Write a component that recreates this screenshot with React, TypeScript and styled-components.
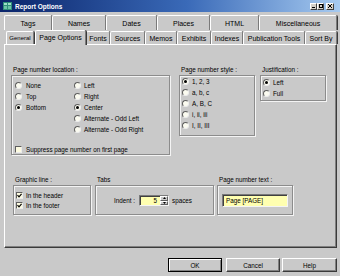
import styled, { createGlobalStyle } from 'styled-components';

const Global = createGlobalStyle`
    * { box-sizing: border-box; }
    body {
        margin: 0;
        background: #c9c9c9;
        font-family: "Liberation Sans", Arial, sans-serif;
        color: #000;
    }
`

const gray = '#c9c9c9'

const Window = styled.div`
    width: 340px;
    height: 276px;
    background: ${gray};
    display: flex;
    flex-direction: column;
    overflow: hidden;
`

const TitleBar = styled.div`
    height: 12px;
    flex: none;
    display: flex;
    align-items: center;
    padding: 0 6px 0 3px;
    background: linear-gradient(90deg, #0a246a 0%, #3a6ab8 55%, #a6caf0 100%);
`

const Title = styled.span`
    color: #fff;
    font-weight: bold;
    font-size: 6.5px;
    margin-left: 3px;
    flex: 1;
`

const Controls = styled.div`
    display: flex;
    align-items: center;
`

const CtrlButton = styled.div<{ $gap?: number; $w?: number }>`
    width: ${p => p.$w || 7}px;
    height: 7px;
    margin-left: ${p => p.$gap || 0}px;
    background: #d4d0c8;
    border: 1px solid;
    border-color: #fff #404040 #404040 #fff;
    display: flex;
    align-items: center;
    justify-content: center;
`

const Body = styled.div`
    flex: 1;
    display: flex;
    flex-direction: column;
    padding: 2px 3px 0 4px;
`

const TabRow = styled.div<{ $h: number; $indent?: number }>`
    height: ${p => p.$h}px;
    display: flex;
    padding-left: ${p => p.$indent || 0}px;
    flex: none;
`

const Tab = styled.div<{ $w: number; $active?: boolean; $small?: boolean; $gap?: number }>`
    width: ${p => p.$w}px;
    flex: none;
    margin-left: ${p => p.$gap || 0}px;
    margin-top: ${p => (p.$active ? 0 : 1)}px;
    display: flex;
    align-items: center;
    justify-content: center;
    font-size: ${p => (p.$small ? 6 : 7)}px;
    border-top: 1px solid #fff;
    border-left: 1px solid #fff;
    border-right: 1px solid #7a7a7a;
    box-shadow: 1px 0 0 #3a3a3a;
    border-radius: 2px 2px 0 0;
    white-space: nowrap;
    ${p => p.$active && `
        background: ${gray};
        position: relative;
        z-index: 1;
        margin-bottom: -1px;
        padding-bottom: 1px;
    `}
`

const Panel = styled.div`
    width: 333px;
    height: 204px;
    flex: none;
    border: 1px solid;
    border-color: #fff #3a3a3a #3a3a3a #fff;
    box-shadow: inset -1px -1px 0 #808080;
    display: flex;
    flex-direction: column;
`

const Section = styled.div<{ $top: number; $left: number }>`
    display: flex;
    align-items: flex-start;
    margin-top: ${p => p.$top}px;
    padding-left: ${p => p.$left}px;
`

const Group = styled.div<{ $w: number; $gap?: number }>`
    width: ${p => p.$w}px;
    margin-left: ${p => p.$gap || 0}px;
    display: flex;
    flex-direction: column;
`

const GroupLabel = styled.div`
    height: 10px;
    line-height: 10px;
    font-size: 6.3px;
    padding-left: 2px;
    white-space: nowrap;
`

const GroupBox = styled.div<{ $h: number; $pad: string; $row?: boolean }>`
    height: ${p => p.$h}px;
    padding: ${p => p.$pad};
    border: 1px solid #8c8c8c;
    box-shadow: 1px 1px 0 #f4f4f4, inset 1px 1px 0 #f4f4f4;
    display: flex;
    flex-direction: ${p => (p.$row ? 'row' : 'column')};
    align-items: ${p => (p.$row ? 'center' : 'stretch')};
`

const Columns = styled.div`
    display: flex;
`

const Column = styled.div<{ $w?: number }>`
    width: ${p => (p.$w ? `${p.$w}px` : 'auto')};
    display: flex;
    flex-direction: column;
`

const Option = styled.div<{ $h?: number; $gap?: number }>`
    height: ${p => p.$h || 11}px;
    display: flex;
    align-items: center;
    gap: ${p => p.$gap || 4}px;
    font-size: 6.3px;
    white-space: nowrap;
`

const RadioDot = styled.span<{ $on?: boolean }>`
    width: 7px;
    height: 7px;
    flex: none;
    border-radius: 50%;
    background: #fbfbf0;
    border: 1px solid;
    border-color: #5e5e5e #ececec #ececec #5e5e5e;
    display: flex;
    align-items: center;
    justify-content: center;
    &::after {
        content: '';
        width: 3px;
        height: 3px;
        border-radius: 50%;
        background: ${p => (p.$on ? '#000' : 'transparent')};
    }
`

const CheckBox = styled.span`
    width: 7px;
    height: 7px;
    flex: none;
    background: #fdfbe0;
    border: 1px solid;
    border-color: #5e5e5e #ececec #ececec #5e5e5e;
    display: flex;
    align-items: center;
    justify-content: center;
`

const Field = styled.div<{ $w: number; $h: number }>`
    width: ${p => p.$w}px;
    height: ${p => p.$h}px;
    flex: none;
    display: flex;
    background: #ffffb0;
    border: 1px solid;
    border-color: #7a7a7a #f4f4f4 #f4f4f4 #7a7a7a;
    box-shadow: inset 1px 1px 0 #404040;
    font-size: 6.3px;
`

const FieldText = styled.div<{ $right?: boolean }>`
    flex: 1;
    display: flex;
    align-items: center;
    justify-content: ${p => (p.$right ? 'flex-end' : 'flex-start')};
    padding: 0 3px;
`

const Spinner = styled.div`
    width: 8px;
    display: flex;
    flex-direction: column;
`

const SpinHalf = styled.div`
    flex: 1;
    background: ${gray};
    border: 1px solid;
    border-color: #fff #5e5e5e #5e5e5e #fff;
    display: flex;
    align-items: center;
    justify-content: center;
`

const Text = styled.span<{ $gap?: number }>`
    font-size: 6.3px;
    margin-left: ${p => p.$gap || 0}px;
    white-space: nowrap;
`

const Footer = styled.div`
    display: flex;
    justify-content: flex-end;
    padding-top: 10px;
`

const Button = styled.div<{ $w: number; $gap?: number; $default?: boolean }>`
    width: ${p => p.$w}px;
    height: 14px;
    margin-left: ${p => p.$gap || 0}px;
    display: flex;
    align-items: center;
    justify-content: center;
    font-size: 6.3px;
    border: 1px solid;
    border-color: ${p => (p.$default ? '#000' : '#fff #3a3a3a #3a3a3a #fff')};
    box-shadow: ${p => (p.$default ? 'inset 1px 1px 0 #fff, inset -1px -1px 0 #808080' : 'inset -1px -1px 0 #808080')};
`

const Arrow = ({ up }: { up?: boolean }) => (
    <svg width="3" height="2" viewBox="0 0 3 2">
        <path d={up ? 'M0 2 L1.5 0 L3 2 Z' : 'M0 0 L1.5 2 L3 0 Z'} fill="#000" />
    </svg>
)

const Check = () => (
    <svg width="5" height="5" viewBox="0 0 5 5">
        <path d="M0.5 2.2 L2 3.8 L4.6 0.8" stroke="#000" strokeWidth="1.2" fill="none" />
    </svg>
)

const AppIcon = () => (
    <svg width="9" height="8" viewBox="0 0 9 8">
        <rect x="0" y="0" width="9" height="8" fill="#2f8f7a" />
        <rect x="1" y="1" width="3" height="2" fill="#9fe0c8" />
        <rect x="5" y="1" width="3" height="2" fill="#9fe0c8" />
        <rect x="1" y="4" width="3" height="3" fill="#6cc4a6" />
        <rect x="5" y="4" width="3" height="3" fill="#6cc4a6" />
    </svg>
)

const topTabs = [
    ['Tags', 48], ['Names', 54], ['Dates', 51], ['Places', 53], ['HTML', 49], ['Miscellaneous', 78],
] as const

const subTabs = [
    ['Page Options', 51], ['Fonts', 24], ['Sources', 35], ['Memos', 32], ['Exhibits', 34],
    ['Indexes', 32], ['Publication Tools', 62], ['Sort By', 32],
] as const

const locationLeft = [['None', false], ['Top', false], ['Bottom', true]] as const
const locationRight = [
    ['Left', false], ['Right', false], ['Center', true],
    ['Alternate - Odd Left', false], ['Alternate - Odd Right', false],
] as const
const styles = [['1, 2, 3', true], ['a, b, c', false], ['A, B, C', false], ['i, ii, iii', false], ['I, II, III', false]] as const

export default function App() {
    return (
        <Window>
            <Global />
            <TitleBar>
                <AppIcon />
                <Title>Report Options</Title>
                <Controls>
                    <CtrlButton>
                        <svg width="3" height="3" viewBox="0 0 3 3"><rect x="0" y="2" width="3" height="1" fill="#000" /></svg>
                    </CtrlButton>
                    <CtrlButton>
                        <svg width="4" height="4" viewBox="0 0 4 4"><rect x="0.5" y="0.5" width="3" height="3" stroke="#000" fill="none" /></svg>
                    </CtrlButton>
                    <CtrlButton $gap={2} $w={8}>
                        <svg width="4" height="4" viewBox="0 0 4 4"><path d="M0 0 L4 4 M4 0 L0 4" stroke="#000" strokeWidth="1" /></svg>
                    </CtrlButton>
                </Controls>
            </TitleBar>
            <Body>
                <TabRow $h={16}>
                    {topTabs.map(([label, w]) => (
                        <Tab key={label} $w={w}>{label}</Tab>
                    ))}
                </TabRow>
                <TabRow $h={14} $indent={2}>
                    <Tab $w={28} $small>General</Tab>
                    {subTabs.map(([label, w], i) => (
                        <Tab key={label} $w={w} $gap={i === 0 ? 1 : 0} $active={i === 0}>{label}</Tab>
                    ))}
                </TabRow>
                <Panel>
                    <Section $top={20} $left={6}>
                        <Group $w={159}>
                            <GroupLabel>Page number location :</GroupLabel>
                            <GroupBox $h={80} $pad="4px 0 0 3px">
                                <Columns>
                                    <Column $w={59}>
                                        {locationLeft.map(([label, on]) => (
                                            <Option key={label}><RadioDot $on={on} />{label}</Option>
                                        ))}
                                    </Column>
                                    <Column>
                                        {locationRight.map(([label, on]) => (
                                            <Option key={label} $gap={3}><RadioDot $on={on} />{label}</Option>
                                        ))}
                                    </Column>
                                </Columns>
                                <Option $h={9} style={{ marginTop: 10 }}>
                                    <CheckBox />Suppress page number on first page
                                </Option>
                            </GroupBox>
                        </Group>
                        <Group $w={76} $gap={9}>
                            <GroupLabel>Page number style :</GroupLabel>
                            <GroupBox $h={61} $pad="0 0 0 2px">
                                {styles.map(([label, on]) => (
                                    <Option key={label} $gap={3}><RadioDot $on={on} />{label}</Option>
                                ))}
                            </GroupBox>
                        </Group>
                        <Group $w={66} $gap={5}>
                            <GroupLabel>Justification :</GroupLabel>
                            <GroupBox $h={26} $pad="1px 0 0 2px">
                                <Option $gap={3}><RadioDot $on />Left</Option>
                                <Option $gap={3}><RadioDot />Full</Option>
                            </GroupBox>
                        </Group>
                    </Section>
                    <Section $top={20} $left={8}>
                        <Group $w={78}>
                            <GroupLabel>Graphic line :</GroupLabel>
                            <GroupBox $h={30} $pad="4px 0 0 2px">
                                <Option $h={10} $gap={3}><CheckBox><Check /></CheckBox>In the header</Option>
                                <Option $h={10} $gap={3}><CheckBox><Check /></CheckBox>In the footer</Option>
                            </GroupBox>
                        </Group>
                        <Group $w={119} $gap={4}>
                            <GroupLabel>Tabs</GroupLabel>
                            <GroupBox $h={30} $pad="1px 0 0 18px" $row>
                                <Text>Indent :</Text>
                                <Field $w={30} $h={11} style={{ marginLeft: 4 }}>
                                    <FieldText $right>5</FieldText>
                                    <Spinner>
                                        <SpinHalf><Arrow up /></SpinHalf>
                                        <SpinHalf><Arrow /></SpinHalf>
                                    </Spinner>
                                </Field>
                                <Text $gap={3}>spaces</Text>
                            </GroupBox>
                        </Group>
                        <Group $w={76} $gap={3}>
                            <GroupLabel>Page number text :</GroupLabel>
                            <GroupBox $h={30} $pad="0 0 0 4px" $row>
                                <Field $w={66} $h={13}>
                                    <FieldText>Page [PAGE]</FieldText>
                                </Field>
                            </GroupBox>
                        </Group>
                    </Section>
                </Panel>
                <Footer>
                    <Button $w={54} $default>OK</Button>
                    <Button $w={54} $gap={4}>Cancel</Button>
                    <Button $w={55} $gap={2}>Help</Button>
                </Footer>
            </Body>
        </Window>
    )
}
